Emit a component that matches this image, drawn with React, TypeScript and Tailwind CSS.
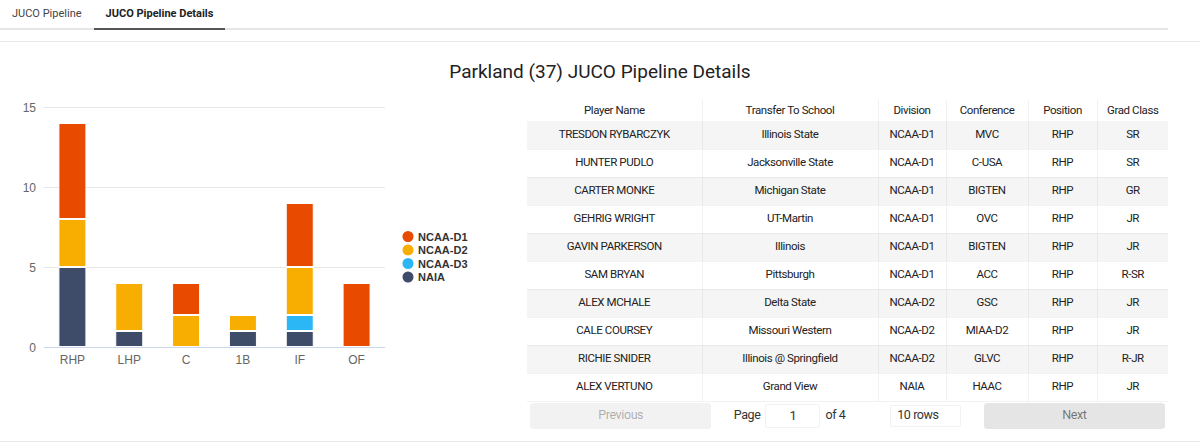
import { useState } from 'react';

type Division = 'NCAA-D1' | 'NCAA-D2' | 'NCAA-D3' | 'NAIA';

const DIVISION_COLORS: Record<Division, string> = {
  'NCAA-D1': '#e84a00',
  'NCAA-D2': '#f8ae00',
  'NCAA-D3': '#2bb7f5',
  NAIA: '#3e4c6a',
};

// stacked from the bottom up
const STACK_ORDER: Division[] = ['NAIA', 'NCAA-D3', 'NCAA-D2', 'NCAA-D1'];

const positions: { name: string; counts: Partial<Record<Division, number>> }[] = [
  { name: 'RHP', counts: { NAIA: 5, 'NCAA-D2': 3, 'NCAA-D1': 6 } },
  { name: 'LHP', counts: { NAIA: 1, 'NCAA-D2': 3 } },
  { name: 'C', counts: { 'NCAA-D2': 2, 'NCAA-D1': 2 } },
  { name: '1B', counts: { NAIA: 1, 'NCAA-D2': 1 } },
  { name: 'IF', counts: { NAIA: 1, 'NCAA-D3': 1, 'NCAA-D2': 3, 'NCAA-D1': 4 } },
  { name: 'OF', counts: { 'NCAA-D1': 4 } },
];

const players = [
  ['TRESDON RYBARCZYK', 'Illinois State', 'NCAA-D1', 'MVC', 'RHP', 'SR'],
  ['HUNTER PUDLO', 'Jacksonville State', 'NCAA-D1', 'C-USA', 'RHP', 'SR'],
  ['CARTER MONKE', 'Michigan State', 'NCAA-D1', 'BIGTEN', 'RHP', 'GR'],
  ['GEHRIG WRIGHT', 'UT-Martin', 'NCAA-D1', 'OVC', 'RHP', 'JR'],
  ['GAVIN PARKERSON', 'Illinois', 'NCAA-D1', 'BIGTEN', 'RHP', 'JR'],
  ['SAM BRYAN', 'Pittsburgh', 'NCAA-D1', 'ACC', 'RHP', 'R-SR'],
  ['ALEX MCHALE', 'Delta State', 'NCAA-D2', 'GSC', 'RHP', 'JR'],
  ['CALE COURSEY', 'Missouri Western', 'NCAA-D2', 'MIAA-D2', 'RHP', 'JR'],
  ['RICHIE SNIDER', 'Illinois @ Springfield', 'NCAA-D2', 'GLVC', 'RHP', 'R-JR'],
  ['ALEX VERTUNO', 'Grand View', 'NAIA', 'HAAC', 'RHP', 'JR'],
];

const columns = [
  { label: 'Player Name', width: 'w-[175px]' },
  { label: 'Transfer To School', width: 'w-[176px]' },
  { label: 'Division', width: 'w-[68px]' },
  { label: 'Conference', width: 'w-[82px]' },
  { label: 'Position', width: 'w-[69px]' },
  { label: 'Grad Class', width: 'w-[71px]' },
];

const PositionChart = () => {
  const left = 44;
  const right = 385;
  const zero = 252;
  const unit = 16;
  const slot = (right - left) / positions.length;
  const barWidth = 28;

  return (
    <svg width={520} height={290} className="shrink-0" style={{ fontFamily: '"Liberation Sans", Arial, sans-serif' }}>
      {[0, 5, 10, 15].map((tick) => {
        const y = zero - tick * unit;
        return (
          <g key={tick}>
            <line x1={left} x2={right} y1={y + 0.5} y2={y + 0.5} stroke={tick === 0 ? '#ccd6eb' : '#e6e6e6'} />
            <text x={36} y={y + 5} textAnchor="end" fontSize={12} fill="#666">
              {tick}
            </text>
          </g>
        );
      })}

      {positions.map((pos, i) => {
        const x = left + slot * i + (slot - barWidth) / 2;
        let top = zero;
        return (
          <g key={pos.name}>
            {STACK_ORDER.map((div) => {
              const n = pos.counts[div];
              if (!n) return null;
              top -= n * unit;
              return (
                <rect
                  key={div}
                  x={x + 0.5}
                  y={top + 0.5}
                  width={barWidth - 1}
                  height={n * unit - 1}
                  fill={DIVISION_COLORS[div]}
                  stroke="#fff"
                  strokeWidth={1}
                />
              );
            })}
            <text x={left + slot * (i + 0.5)} y={zero + 17} textAnchor="middle" fontSize={12} fill="#666">
              {pos.name}
            </text>
          </g>
        );
      })}

      {(['NCAA-D1', 'NCAA-D2', 'NCAA-D3', 'NAIA'] as Division[]).map((div, i) => (
        <g key={div}>
          <circle cx={408} cy={141.5 + i * 13.5} r={5.5} fill={DIVISION_COLORS[div]} />
          <text x={418} y={145.5 + i * 13.5} fontSize={11} fontWeight="bold" fill="#333">
            {div}
          </text>
        </g>
      ))}
    </svg>
  );
};

const PlayerTable = () => {
  const [page, setPage] = useState(1);

  return (
    <div className="mt-[5px] w-[641px] text-[11.5px] tracking-[-0.4px] text-[#222]">
      <table className="w-full table-fixed border-collapse">
        <colgroup>
          {columns.map((c) => (
            <col key={c.label} className={c.width} />
          ))}
        </colgroup>
        <thead>
          <tr className="h-[21px]">
            {columns.map((c, i) => (
              <th
                key={c.label}
                className={`font-normal ${i < columns.length - 1 ? 'border-r border-black/5' : ''}`}
              >
                {c.label}
              </th>
            ))}
          </tr>
        </thead>
        <tbody>
          {players.map((row, r) => (
            <tr key={row[0]} className={`h-[28px] border-b border-black/5 ${r % 2 === 0 ? 'bg-black/[0.04]' : ''}`}>
              {row.map((cell, i) => (
                <td key={i} className={`text-center ${i < row.length - 1 ? 'border-r border-black/5' : ''}`}>
                  {cell}
                </td>
              ))}
            </tr>
          ))}
        </tbody>
      </table>

      <div className="flex items-center px-[3px] pt-[1px] text-[12.5px]">
        <button disabled className="h-[26px] flex-1 rounded-[3px] bg-black/5 text-black/30">
          Previous
        </button>
        <div className="flex flex-[1.5] items-center justify-around">
          <span className="mx-[10px] flex items-center text-[#333]">
            Page
            <input
              value={page}
              onChange={(e) => setPage(Number(e.target.value) || 1)}
              className="mx-[5px] h-[24px] w-[55px] rounded-[3px] border border-black/5 bg-white text-center text-[13px] outline-none"
            />
            of 4
          </span>
          <div className="mx-[10px] flex h-[22px] w-[71px] items-center rounded-[3px] border border-black/5 bg-white pl-[6px] text-[#333]">
            10 rows
          </div>
        </div>
        <button className="h-[26px] flex-1 rounded-[3px] bg-black/10 text-black/50">Next</button>
      </div>
    </div>
  );
};

export default function App() {
  const [tab, setTab] = useState(1);
  const tabs = ['JUCO Pipeline', 'JUCO Pipeline Details'];

  return (
    <div className="h-[442px] w-[1200px] overflow-hidden bg-white" style={{ fontFamily: 'Roboto, sans-serif' }}>
      <div className="flex h-[30px] w-[1168px] border-b-2 border-[#e6e6e6]">
        {tabs.map((t, i) => (
          <button
            key={t}
            onClick={() => setTab(i)}
            className={`-mb-[2px] h-[30px] border-b-2 px-3 text-[11px] ${
              tab === i ? 'border-[#555] font-bold text-[#222]' : 'border-transparent text-[#444]'
            }`}
          >
            {t}
          </button>
        ))}
      </div>
      <div className="h-[12px] border-b border-[#e8e8e8]" />

      <div className="h-[400px] border-b border-[#e8e8e8]">
        <h2 className="pt-[18px] text-center text-[19px] leading-[24px] text-[#222]">
          Parkland (37) JUCO Pipeline Details
        </h2>
        <div className="mt-[11px] flex">
          <PositionChart />
          <div className="ml-[7px]">
            <PlayerTable />
          </div>
        </div>
      </div>
    </div>
  );
}
